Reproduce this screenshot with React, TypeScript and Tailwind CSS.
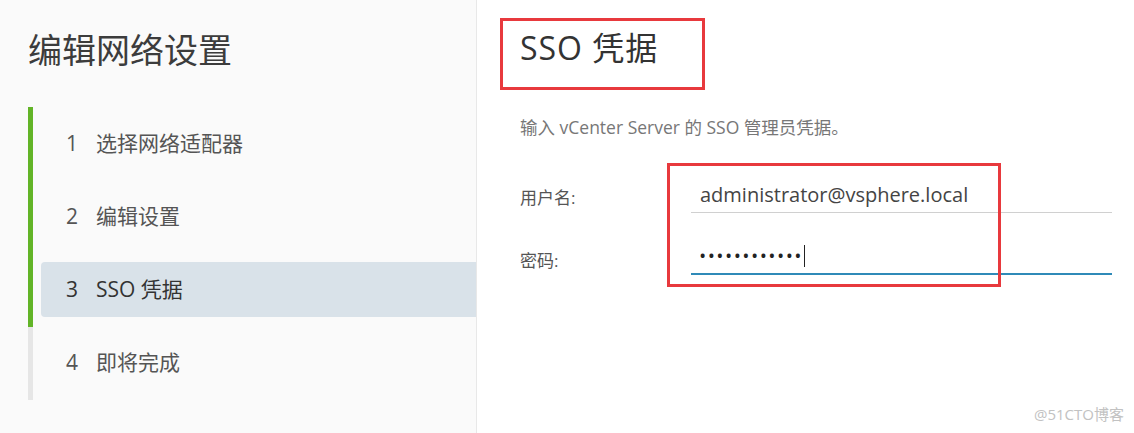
const steps = [
  { n: '1', label: '选择网络适配器' },
  { n: '2', label: '编辑设置' },
  { n: '3', label: 'SSO 凭据', active: true },
  { n: '4', label: '即将完成' },
];

export default function App() {
  return (
    <div className="relative flex w-[1134px] h-[433px] overflow-hidden bg-white font-['Open_Sans','Noto_Sans_CJK_SC',sans-serif]">
      {/* Left: wizard steps */}
      <div className="w-[477px] shrink-0 bg-[#fafafa] border-r border-[#e8e8e8] pl-[28px] pt-[30px]">
        <h1 className="text-[34px] leading-[40px] text-[#3c3c3c] font-normal">编辑网络设置</h1>
        <div className="flex mt-[37px]">
          <div className="w-[5px] flex flex-col shrink-0">
            <div className="h-[220px] bg-[#62b427]" />
            <div className="h-[73px] bg-[#e6e6e6]" />
          </div>
          <div className="flex-1 ml-[8px] pt-[9px] flex flex-col gap-[18px]">
            {steps.map((s) => (
              <div
                key={s.n}
                className={`h-[55px] flex items-center pl-[25px] rounded-l-[4px] text-[21px] ${
                  s.active ? 'bg-[#d9e2e9] text-[#333]' : 'text-[#555]'
                }`}
              >
                <span className="w-[30px]">{s.n}</span>
                <span>{s.label}</span>
              </div>
            ))}
          </div>
        </div>
      </div>

      {/* Right: SSO form */}
      <div className="flex-1 pl-[43px] pt-[28px]">
        <h2 className="text-[32px] leading-[40px] tracking-[1px] text-[#333] font-normal">SSO 凭据</h2>
        <p className="mt-[47px] text-[17.5px] leading-[24px] text-[#777]">输入 vCenter Server 的 SSO 管理员凭据。</p>
        <div className="mt-[38px] flex flex-col gap-[26px]">
          <div className="flex">
            <div className="w-[171px] h-[36px] flex items-center pt-[6px] text-[17px] text-[#555]">用户名:</div>
            <div className="w-[421px] h-[36px] flex items-center pl-[9px] border-b border-[#d0d0d0] text-[20px] text-[#444]">
              administrator@vsphere.local
            </div>
          </div>
          <div className="flex">
            <div className="w-[171px] h-[36px] flex items-center pt-[8px] text-[17px] text-[#555]">密码:</div>
            <div className="w-[421px] h-[36px] flex items-center pl-[9px] border-b-2 border-[#2f8ab8] text-[#222]">
              <span className="text-[14px] tracking-[3.4px] font-bold leading-none">••••••••••••</span>
              <span className="w-px h-[22px] bg-[#222]" />
            </div>
          </div>
        </div>
      </div>

      {/* Annotation boxes */}
      <div className="absolute left-[500px] top-[18px] w-[205px] h-[72px] border-[3px] border-[#e8393d]" />
      <div className="absolute left-[667px] top-[163px] w-[334px] h-[124px] border-[3px] border-[#e8393d]" />

      {/* Watermark */}
      <div className="absolute right-[10px] bottom-[8px] text-[15px] text-[#c2c2c2]">@51CTO博客</div>
    </div>
  );
}
